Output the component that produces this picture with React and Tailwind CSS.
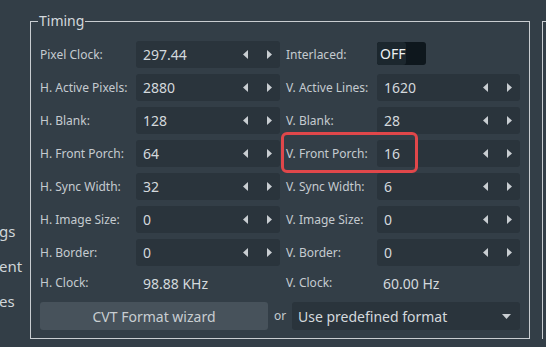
import React from 'react';

const rows = [
  ['Pixel Clock:', '297.44', 'Interlaced:', null],
  ['H. Active Pixels:', '2880', 'V. Active Lines:', '1620'],
  ['H. Blank:', '128', 'V. Blank:', '28'],
  ['H. Front Porch:', '64', 'V. Front Porch:', '16'],
  ['H. Sync Width:', '32', 'V. Sync Width:', '6'],
  ['H. Image Size:', '0', 'V. Image Size:', '0'],
  ['H. Border:', '0', 'V. Border:', '0'],
];

function Arrows() {
  return (
    <div className="flex items-center gap-[19px] text-[#c9ced2]">
      <svg width="5" height="9" viewBox="0 0 5 9"><polygon points="5,0 5,9 0,4.5" fill="currentColor" /></svg>
      <svg width="5" height="9" viewBox="0 0 5 9"><polygon points="0,0 0,9 5,4.5" fill="currentColor" /></svg>
    </div>
  );
}

function Spin({ value, w }) {
  return (
    <div className={`${w} h-[27px] rounded-[3px] bg-[#2a343c] flex items-center pl-[7px] pr-[8px]`}>
      <span className="flex-1 text-[14px] text-[#d4d9dd]">{value}</span>
      <Arrows />
    </div>
  );
}

function Toggle() {
  return (
    <div className="w-[49px] h-[23px] mt-[1px] rounded-[3px] bg-[#0e171d] flex">
      <div className="w-[29px] h-full rounded-[3px] bg-[#1c272e] flex items-center pl-[3px] text-[14px] text-[#eef1f3]">OFF</div>
    </div>
  );
}

export default function App() {
  return (
    <div className="relative w-[546px] h-[347px] bg-[#333e47] flex overflow-hidden text-[#c5cbd0]" style={{ fontFamily: '"Noto Sans", "Open Sans", sans-serif' }}>
      <div className="w-[30px] shrink-0 overflow-hidden flex flex-col pt-[221px] text-[15px] text-[#d0d5d9] leading-[20px] whitespace-nowrap">
        <div className="h-[35px] -ml-[1px]">gs</div>
        <div className="h-[35px] -ml-[1px]">ent</div>
        <div className="h-[35px] -ml-[1px]">es</div>
      </div>

      <fieldset className="mt-[11px] w-[500px] h-[328px] shrink-0 border border-[#c9cdd1] px-[9px] m-0 min-w-0">
        <legend className="ml-[-2px] px-[1px] text-[14px] leading-[20px] text-[#d4d9dd]">Timing</legend>
        <div className="flex flex-col gap-[6px] mt-[10px]">
          {rows.map(([l1, v1, l2, v2]) => (
            <div key={l1} className="flex items-center h-[27px] text-[12px]">
              <div className="w-[96px]">{l1}</div>
              <Spin value={v1} w="w-[144px]" />
              <div className="w-[91px] ml-[6px]">{l2}</div>
              {v2 === null ? <div className="self-start"><Toggle /></div> : <Spin value={v2} w="w-[143px]" />}
            </div>
          ))}
          <div className="flex items-center h-[24px] mt-[-1px] text-[12px]">
            <div className="w-[96px]">H. Clock:</div>
            <div className="w-[144px] pl-[7px] text-[14px] text-[#d4d9dd]">98.88 KHz</div>
            <div className="w-[91px] ml-[6px]">V. Clock:</div>
            <div className="pl-[6px] text-[14px] text-[#d4d9dd]">60.00 Hz</div>
          </div>
          <div className="flex items-center h-[28px] mt-[1px]">
            <button className="w-[228px] h-[28px] rounded-[3px] bg-[#47525b] text-[14px] text-[#c9ced2]">CVT Format wizard</button>
            <span className="ml-[6px] w-[18px] text-[12px] text-[#c5cbd0]">or</span>
            <div className="w-[228px] h-[28px] rounded-[3px] bg-[#2a343c] flex items-center pl-[6px] pr-[9px]">
              <span className="flex-1 text-[14px] text-[#d4d9dd]">Use predefined format</span>
              <svg width="9" height="5" viewBox="0 0 9 5"><polygon points="0,0 9,0 4.5,5" fill="#c9ced2" /></svg>
            </div>
          </div>
        </div>
      </fieldset>

      <div className="ml-[12px] mt-[21px] h-[318px] flex-1 border-l border-t border-[#c9cdd1]" />

      <div className="absolute left-[281px] top-[132px] w-[137px] h-[41px] rounded-[6px] border-[3px] border-[#e0474a]" />
    </div>
  );
}
